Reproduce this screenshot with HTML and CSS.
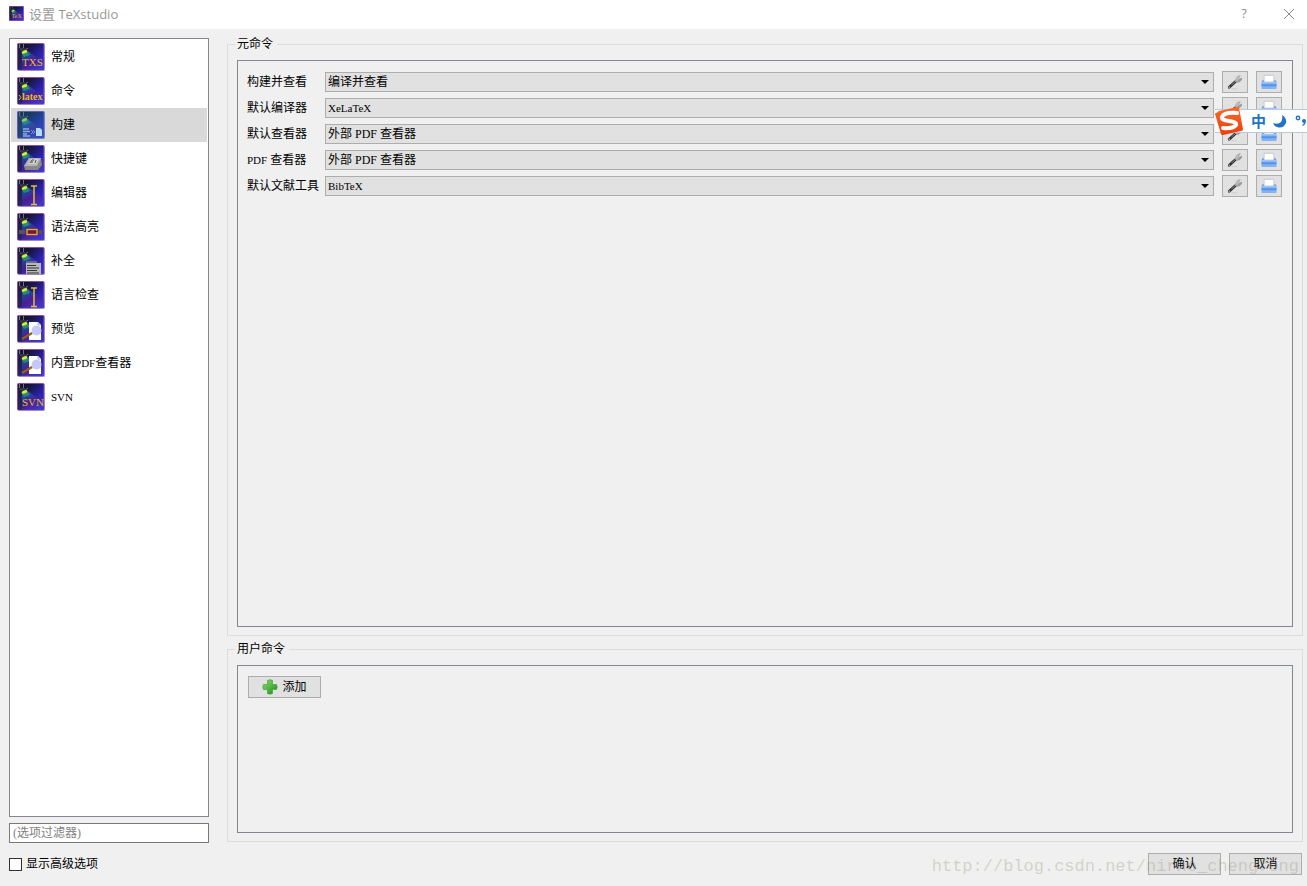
FILE: index.html
```html
<!DOCTYPE html>
<html lang="zh-CN">
<head>
    <meta charset="UTF-8">
    <meta name="viewport" content="width=device-width, initial-scale=1.0">
    <title>设置 TeXstudio</title>
    <link rel="stylesheet" href="styles.css">
</head>
<body>
    <!-- Shared icon shapes -->
    <svg class="sprite" aria-hidden="true">
        <defs>
            <linearGradient id="night" x1="0" y1="0" x2="1" y2="1">
                <stop offset="0" stop-color="#0c0c14"/>
                <stop offset="0.3" stop-color="#191640"/>
                <stop offset="0.6" stop-color="#2822a8"/>
                <stop offset="1" stop-color="#4238d8"/>
            </linearGradient>
            <linearGradient id="beam" x1="0" y1="0" x2="0.6" y2="1">
                <stop offset="0" stop-color="#2fa060"/>
                <stop offset="0.25" stop-color="#2458b8"/>
                <stop offset="0.6" stop-color="#5a1c8c"/>
                <stop offset="1" stop-color="#4038c8"/>
            </linearGradient>
            <linearGradient id="metal" x1="0" y1="0" x2="1" y2="1">
                <stop offset="0" stop-color="#e8e8e8"/>
                <stop offset="1" stop-color="#777"/>
            </linearGradient>
            <linearGradient id="tray" x1="0" y1="0" x2="0" y2="1">
                <stop offset="0" stop-color="#a9cdfb"/>
                <stop offset="0.5" stop-color="#5f9cf0"/>
                <stop offset="1" stop-color="#9cc8fc"/>
            </linearGradient>
            <linearGradient id="leaf" x1="0" y1="0" x2="1" y2="1">
                <stop offset="0" stop-color="#8be06a"/>
                <stop offset="1" stop-color="#1c8a1c"/>
            </linearGradient>
            <linearGradient id="flame" x1="0" y1="0" x2="0" y2="1">
                <stop offset="0" stop-color="#fb6a2a"/>
                <stop offset="1" stop-color="#ee3d0c"/>
            </linearGradient>
        </defs>
        <symbol id="tile" viewBox="0 0 28 28">
            <rect x="1" y="1" width="27" height="27" rx="1" fill="#c4bccb"/>
            <rect x="0.5" y="0.5" width="26.5" height="26.5" rx="1" fill="url(#night)" stroke="#8a4cb0"/>
            <path d="M5 10 L11 8 L27 20 V27 H5 Z" fill="url(#beam)" opacity="0.7"/>
            <path d="M1 1 H4 L5 9 V27 H1 Z" fill="#252a55" opacity="0.6"/>
            <path d="M2.500 1 V5 M6.500 1 V5 M3 6 L7 8 L11 5" stroke="#70747c" fill="none"/>
            <path d="M3 5 L8 5 L9 8 L5 9 Z" fill="#34363c"/>
            <ellipse cx="7.500" cy="9" rx="3" ry="1.600" transform="rotate(-22 7.500 9)" fill="#d8ee3c"/>
            <path d="M5 11 L11 9 L13 12 L7 14 Z" fill="#30b060" opacity="0.6"/>
        </symbol>
        <symbol id="page" viewBox="0 0 28 28">
            <path d="M12 7 H21 L24 10 V25 H12 Z" fill="#fff"/>
            <path d="M21 7 V10 H24" fill="none" stroke="#aaa"/>
            <circle cx="19.500" cy="15.500" r="5" fill="#c6c8fa"/>
            <path d="M15 18 L5 24" stroke="#906018" stroke-width="2.400"/>
        </symbol>
        <symbol id="beamCursor" viewBox="0 0 28 28">
            <path d="M14 7 H16.500 L17 8 L17.500 7 H20 M17 8 V25 M14 25.500 H16.500 L17 24.500 L17.500 25.500 H20" fill="none" stroke="#e5bd2a" stroke-width="1.500"/>
        </symbol>
        <symbol id="wrench" viewBox="0 0 18 18">
            <path d="M5 16.500 H11" stroke="#ccc"/>
            <path d="M2.500 15 L9 9" stroke="#2c2c2c" stroke-width="3" stroke-linecap="round"/>
            <path d="M5 12.500 L12 6" stroke="#9c9c9c" stroke-width="1"/>
            <path d="M9.500 8.500 L10 5 L12 2.500 L15 2 L13 4.500 L14 6 L16.500 4.500 L16 7 L13.500 9 L10.500 9.500 Z" fill="url(#metal)" stroke="#888" stroke-width="0.600"/>
            <circle cx="2.600" cy="14.800" r="0.800" fill="#ddd"/>
        </symbol>
        <symbol id="tools" viewBox="0 0 18 18">
            <path d="M1.500 7 H16.500 L17.500 10 H0.500 Z" fill="#6a9fe6"/>
            <path d="M3.500 9 V1.500 H14.500 V9 Z" fill="#fff" stroke="#b8bcc4" stroke-width="0.800"/>
            <path d="M0.500 9 H17.500 V16.500 H0.500 Z" fill="url(#tray)"/>
            <path d="M0.500 12.500 H17.500" stroke="#4b86e0"/>
            <path d="M1 16 H17" stroke="#6ba2ee"/>
        </symbol>
    </svg>

    <header class="titlebar">
        <svg class="app-icon" viewBox="0 0 28 28">
            <use href="#tile"/>
            <text x="5" y="23" class="tile-text">TeX</text>
        </svg>
        <h1>设置 TeXstudio</h1>
        <button type="button" class="title-btn" aria-label="帮助">?</button>
        <button type="button" class="title-btn" aria-label="关闭">
            <svg viewBox="0 0 12 12"><path d="M1 1 L11 11 M11 1 L1 11" fill="none" stroke="#888"/></svg>
        </button>
    </header>

    <main class="content">
        <aside class="sidebar">
            <ul class="pages">
                <li><button type="button">
                    <svg viewBox="0 0 28 28"><use href="#tile"/><text x="5" y="23" class="tile-text">TXS</text></svg>常规
                </button></li>
                <li><button type="button">
                    <svg viewBox="0 0 28 28"><use href="#tile"/><path d="M2 18 L4 20.500 L2 23" fill="none" stroke="#e5bd2a"/><text x="5" y="23" class="tile-text small">latex</text></svg>命令
                </button></li>
                <li><button type="button" class="selected">
                    <svg viewBox="0 0 28 28">
                        <use href="#tile"/>
                        <rect width="28" height="28" rx="1" fill="#2080b0" opacity="0.35"/>
                        <path d="M6 18 H12 M6 20.500 H13 M6 23 H10 M6 25 H13" stroke="#86b0dc" stroke-width="1.500"/>
                        <path d="M14 19 L16 21 L14 23 M16 19 L18 21 L16 23" fill="none" stroke="#7094c8"/>
                        <path d="M19 17 H23 L25 19 V25 H19 Z" fill="#b4dcf8"/>
                    </svg>构建
                </button></li>
                <li><button type="button">
                    <svg viewBox="0 0 28 28">
                        <use href="#tile"/>
                        <path d="M12 13 H24 L25 20 L21 25 H8 L7 21 Z" fill="#888"/>
                        <path d="M12 13 H24 L20 21 H7 Z" fill="#b4b4b4"/>
                        <path d="M14 14 H22 L19 19 H11 Z" fill="#d0d0d0"/>
                        <path d="M13 18 L15 15 H17 M14 17 H16 M19 15 L18 18" fill="none" stroke="#555"/>
                    </svg>快捷键
                </button></li>
                <li><button type="button">
                    <svg viewBox="0 0 28 28"><use href="#tile"/><use href="#beamCursor"/></svg>编辑器
                </button></li>
                <li><button type="button">
                    <svg viewBox="0 0 28 28">
                        <use href="#tile"/>
                        <path d="M2 17 H8 V21 H2 Z M22 17 H25 V21 H22 Z" fill="#555"/>
                        <rect x="10" y="16.500" width="10" height="5" fill="#701838" stroke="#e5a82a" stroke-width="1.400"/>
                    </svg>语法高亮
                </button></li>
                <li><button type="button">
                    <svg viewBox="0 0 28 28">
                        <use href="#tile"/>
                        <rect x="9" y="14" width="11" height="3" fill="#686898"/>
                        <rect x="9" y="16" width="15" height="11" fill="#b8b8b8"/>
                        <path d="M10 18.500 H19 M10 21 H22 M10 23.500 H20 M10 26 H22" stroke="#333" stroke-width="1.200"/>
                    </svg>补全
                </button></li>
                <li><button type="button">
                    <svg viewBox="0 0 28 28"><use href="#tile"/><use href="#beamCursor"/></svg>语言检查
                </button></li>
                <li><button type="button">
                    <svg viewBox="0 0 28 28"><use href="#tile"/><use href="#page"/></svg>预览
                </button></li>
                <li><button type="button">
                    <svg viewBox="0 0 28 28"><use href="#tile"/><use href="#page"/></svg><span>内置<span class="latin">PDF</span>查看器</span>
                </button></li>
                <li><button type="button">
                    <svg viewBox="0 0 28 28"><use href="#tile"/><text x="5" y="23" class="tile-text">SVN</text></svg><span class="latin">SVN</span>
                </button></li>
            </ul>
            <input type="text" class="filter" placeholder="(选项过滤器)" aria-label="选项过滤器">
        </aside>

        <section class="groups">
            <fieldset class="group meta">
                <legend>元命令</legend>
                <div class="panel">
                    <div class="command">
                        <label for="build">构建并查看</label>
                        <select id="build"><option>编译并查看</option></select>
                        <button type="button" aria-label="配置"><svg><use href="#wrench"/></svg></button>
                        <button type="button" aria-label="选择"><svg><use href="#tools"/></svg></button>
                    </div>
                    <div class="command">
                        <label for="compiler">默认编译器</label>
                        <select id="compiler" class="latin"><option>XeLaTeX</option></select>
                        <button type="button" aria-label="配置"><svg><use href="#wrench"/></svg></button>
                        <button type="button" aria-label="选择"><svg><use href="#tools"/></svg></button>
                    </div>
                    <div class="command">
                        <label for="viewer">默认查看器</label>
                        <select id="viewer"><option>外部 PDF 查看器</option></select>
                        <button type="button" aria-label="配置"><svg><use href="#wrench"/></svg></button>
                        <button type="button" aria-label="选择"><svg><use href="#tools"/></svg></button>
                    </div>
                    <div class="command">
                        <label for="pdf"><span class="latin">PDF</span> 查看器</label>
                        <select id="pdf"><option>外部 PDF 查看器</option></select>
                        <button type="button" aria-label="配置"><svg><use href="#wrench"/></svg></button>
                        <button type="button" aria-label="选择"><svg><use href="#tools"/></svg></button>
                    </div>
                    <div class="command">
                        <label for="bib">默认文献工具</label>
                        <select id="bib" class="latin"><option>BibTeX</option></select>
                        <button type="button" aria-label="配置"><svg><use href="#wrench"/></svg></button>
                        <button type="button" aria-label="选择"><svg><use href="#tools"/></svg></button>
                    </div>
                </div>
            </fieldset>

            <fieldset class="group user">
                <legend>用户命令</legend>
                <div class="panel">
                    <button type="button" class="btn">
                        <svg viewBox="0 0 16 16"><path d="M5.500 1.500 Q8 0 10.500 1.500 V5.500 H14.500 Q16 8 14.500 10.500 H10.500 V14.500 Q8 16 5.500 14.500 V10.500 H1.500 Q0 8 1.500 5.500 H5.500 Z" fill="url(#leaf)" stroke="#3ca53c" stroke-width="0.700"/></svg>添加
                    </button>
                </div>
            </fieldset>
        </section>
    </main>

    <footer class="footer">
        <input type="checkbox" id="advanced">
        <label for="advanced">显示高级选项</label>
        <div class="actions">
            <button type="button" class="btn">确认</button>
            <button type="button" class="btn">取消</button>
        </div>
        <span class="watermark">http://blog.csdn.net/nirno_chengfeng</span>
    </footer>

    <!-- Input method bar, floats over the window edge -->
    <div class="ime">
        <svg class="ime-logo" viewBox="0 0 28 28">
            <path d="M3 5 Q3 4 4 4 L22 0 Q24 0 24 1 L28 22 Q28 24 26 24 L8 28 Q6 28 6 27 L0 7 Q0 6 1 6 Z" fill="url(#flame)"/>
            <path d="M22 6 Q9 5 7 10 Q6 13 14 14 Q22 15 21 18 Q18 22 8 21" fill="none" stroke="#fff" stroke-width="4" stroke-linecap="round"/>
        </svg>
        <span class="ime-mode">中</span>
        <svg class="ime-moon" viewBox="0 0 14 14"><path d="M9 1 Q14 4 13 9 Q10 15 4 13 Q1 12 0 9 Q5 11 8 8 Q10 5 9 1 Z" fill="#2173c4"/></svg>
        <svg class="ime-punct" viewBox="0 0 12 14"><circle cx="3" cy="4" r="1.700" fill="none" stroke="#2173c4" stroke-width="1.400"/><path d="M7 7 Q7 5 9 5 Q11 5 11 7 Q11 10 8 12 L7 11 Q9 10 9 9 Q7 9 7 7 Z" fill="#2173c4"/></svg>
    </div>
</body>
</html>
```

FILE: styles.css
```css
* {
    margin: 0;
    padding: 0;
    box-sizing: border-box;
}
body {
    display: flex;
    flex-direction: column;
    min-height: 100vh;
    position: relative;
    overflow-x: hidden;
    background-color: #f0f0f0;
    color: #000;
    font-family: "Liberation Serif", "Noto Sans CJK SC", serif;
    font-size: 12px;
    line-height: 16px;
}
button,
input,
select {
    font: inherit;
    color: inherit;
}
.sprite {
    position: absolute;
    width: 0;
    height: 0;
}
.latin {
    font-size: 11px;
}

/* Title bar */
.titlebar {
    display: flex;
    align-items: center;
    height: 29px;
    padding: 0 12px 2px 9px;
    background-color: #fff;
    font-family: "Open Sans", "Noto Sans CJK SC", sans-serif;
}
.app-icon {
    width: 15px;
    height: 15px;
    margin-right: 5px;
}
.titlebar h1 {
    flex: 1;
    font-size: 13px;
    font-weight: normal;
    color: #999;
}
.title-btn {
    width: 12px;
    margin-left: 33px;
    border: none;
    background: none;
    color: #888;
}
.title-btn svg {
    display: block;
    width: 12px;
    height: 12px;
}

/* Main area */
.content {
    flex: 1;
    display: flex;
    gap: 18px;
    padding: 7px 4px 0 9px;
}
.sidebar {
    display: flex;
    flex-direction: column;
    gap: 6px;
    width: 200px;
    padding-top: 2px;
}
.pages {
    flex: 1;
    padding: 1px;
    border: 1px solid #828790;
    background-color: #fff;
    list-style: none;
}
.pages button {
    display: flex;
    align-items: center;
    gap: 6px;
    width: 100%;
    height: 34px;
    padding-left: 6px;
    border: none;
    background: none;
    text-align: left;
}
.pages button.selected {
    background-color: #d9d9d9;
}
.pages svg {
    width: 28px;
    height: 28px;
}
.tile-text {
    font-family: "Liberation Serif", serif;
    font-size: 11px;
    fill: #e5bd2a;
}
.tile-text.small {
    font-size: 10px;
    font-weight: bold;
}
.filter {
    height: 20px;
    padding: 0 3px;
    border: 1px solid #7a7a7a;
    background-color: #fff;
}
.filter::placeholder {
    color: #808080;
}

.groups {
    flex: 1;
    display: flex;
    flex-direction: column;
    gap: 5px;
    padding-bottom: 1px;
}
.group {
    display: flex;
    flex-direction: column;
    min-width: 0;
    padding: 8px 9px;
    border: 1px solid #dcdcdc;
}
.group legend {
    margin-left: -2px;
    padding: 0 4px 0 2px;
}
.meta {
    flex: 1;
}
.panel {
    flex: 1;
    padding: 10px;
    border: 1px solid #828790;
}
.meta .panel {
    padding-left: 9px;
}
.user .panel {
    min-height: 168px;
}
.command {
    display: grid;
    grid-template-columns: 70px 1fr 26px 26px;
    column-gap: 8px;
    align-items: center;
    margin-bottom: 4px;
}
.command label {
    white-space: nowrap;
}
.command select {
    height: 20px;
    padding: 0 2px;
    appearance: none;
    border: 1px solid #adadad;
    border-radius: 0;
    background: #e1e1e1 url("data:image/svg+xml,%3Csvg xmlns='http://www.w3.org/2000/svg' viewBox='0 0 8 4'%3E%3Cpath d='M0 0H8L4 4Z'/%3E%3C/svg%3E") no-repeat right 4px center;
    background-size: 8px 4px;
}
.command button {
    display: flex;
    align-items: center;
    justify-content: center;
    height: 22px;
    border: 1px solid #adadad;
    background-color: #e1e1e1;
}
.command svg {
    width: 16px;
    height: 16px;
}
.btn {
    display: flex;
    align-items: center;
    justify-content: center;
    gap: 4px;
    width: 73px;
    height: 22px;
    border: 1px solid #adadad;
    background-color: #e1e1e1;
}
.btn svg {
    width: 16px;
    height: 16px;
}

/* Footer */
.footer {
    display: flex;
    align-items: center;
    gap: 4px;
    position: relative;
    padding: 10px 5px 11px 9px;
}
.footer input {
    width: 13px;
    height: 13px;
    appearance: none;
    border: 1px solid #333;
    background-color: #fff;
}
.footer input:checked {
    background-color: #333;
    box-shadow: inset 0 0 0 2px #fff;
}
.actions {
    display: flex;
    gap: 8px;
    margin-left: auto;
}
.watermark {
    position: absolute;
    right: 8px;
    bottom: 9px;
    font-family: "Liberation Mono", monospace;
    font-size: 17px;
    line-height: 20px;
    color: rgba(150, 150, 130, 0.35);
    pointer-events: none;
}

/* Input method bar */
.ime {
    display: flex;
    align-items: center;
    gap: 8px;
    position: absolute;
    top: 109px;
    right: 0;
    height: 24px;
    border: 1px solid #b9c9d6;
    border-width: 1px 0;
    background-color: #fff;
}
.ime-logo {
    width: 28px;
    height: 28px;
}
.ime-mode {
    width: 14px;
    font-family: "Noto Sans CJK SC", sans-serif;
    font-size: 15px;
    font-weight: bold;
    color: #2173c4;
}
.ime-moon {
    width: 14px;
    height: 14px;
}
.ime-punct {
    width: 12px;
    height: 14px;
}
```
